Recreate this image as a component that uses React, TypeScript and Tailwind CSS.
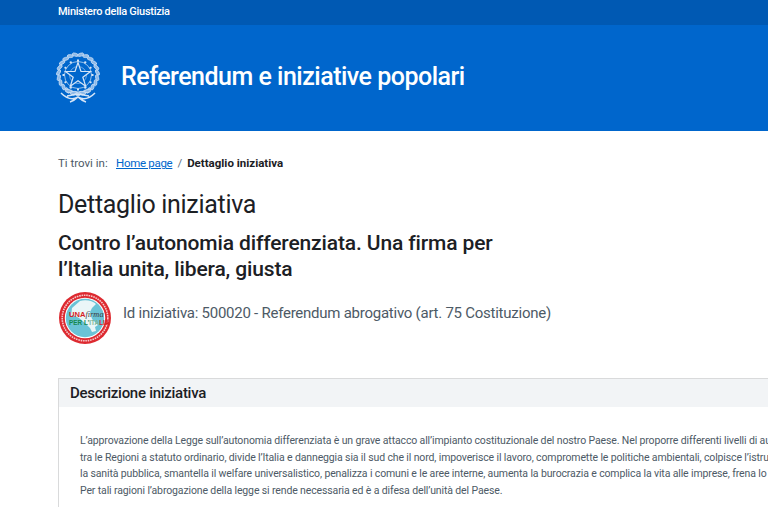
const F = "font-['Roboto','Noto_Sans',sans-serif]";

function Emblem() {
  const leaves = Array.from({ length: 14 }, (_, i) => i);
  const teeth = Array.from({ length: 12 }, (_, i) => i);
  return (
    <svg width="46" height="52" viewBox="0 0 46 52" fill="none" stroke="#d5e5f7" strokeWidth="1">
      {leaves.map((i) => {
        const deg = -82 + i * 15.5;
        const a = (deg * Math.PI) / 180;
        const r = 19.5;
        const lx = 23 - r * Math.cos(a);
        const rx = 23 + r * Math.cos(a);
        const y = 22 + r * Math.sin(a);
        return (
          <g key={i} fill="#8db9e8" strokeWidth="0.7">
            <ellipse cx={lx} cy={y} rx="3.1" ry="1.5" transform={`rotate(${90 - deg + 25} ${lx} ${y})`} />
            <ellipse cx={rx} cy={y} rx="3.1" ry="1.5" transform={`rotate(${90 + deg - 25} ${rx} ${y})`} />
          </g>
        );
      })}
      {teeth.map((i) => {
        const a = (i * 30 * Math.PI) / 180;
        return <line key={i} x1={23 + 13.5 * Math.sin(a)} y1={23 - 13.5 * Math.cos(a)} x2={23 + 15.5 * Math.sin(a)} y2={23 - 15.5 * Math.cos(a)} strokeWidth="2" />;
      })}
      <circle cx="23" cy="23" r="13.5" strokeWidth="0.7" />
      <circle cx="23" cy="23" r="8.5" strokeWidth="0.5" />
      <path d="M23 10.5 L26 19.5 L35.5 19.5 L27.8 25.2 L30.7 34.2 L23 28.7 L15.3 34.2 L18.2 25.2 L10.5 19.5 L20 19.5 Z" fill="#0066cc" strokeWidth="1.2" />
      <path d="M6 41 C12 47 18 48 23 45 C28 48 34 47 40 41 M12 44 L23 42 L34 44 M15 50 C18 49 21 47 23 45 C25 47 28 49 31 50" strokeWidth="1.5" />
    </svg>
  );
}

function Logo() {
  return (
    <svg width="52" height="52" viewBox="0 0 52 52">
      <circle cx="26" cy="26" r="26" fill="#dd2a30" />
      <circle cx="26" cy="26" r="22.8" fill="none" stroke="#f6c9cb" strokeWidth="1.6" strokeDasharray="1.6 0.8" />
      <circle cx="26" cy="26" r="20.2" fill="#fff" />
      <circle cx="26" cy="26" r="19.2" fill="#6ac3d6" />
      <path d="M21 9 C27 7 34 9 37 12 L33 16 L31 20 L33 27 L39 33 L36 35 L37 39 L33 40 L31 36 L26 31 L20 26 L14 23 L12 24 L13 16 Z" fill="#eaf6f8" />
      <text x="10" y="25" fontSize="7.6" fontWeight="900" fill="#d81f26" fontFamily="Liberation Sans">UNA<tspan fontSize="8.4" fontWeight="400" fontStyle="italic" fill="#3d3d3d" fontFamily="Liberation Serif">firma</tspan></text>
      <text x="10" y="33" fontSize="6.4" fontWeight="700" fill="#16894f" fontFamily="Liberation Sans">PER L'<tspan fill="#7fb89a">ITA</tspan><tspan fill="#d81f26">LIA</tspan></text>
    </svg>
  );
}

export default function App() {
  return (
    <div className={`${F} w-[768px] h-[507px] overflow-hidden bg-white text-[#1c2024]`}>
      <div className="h-[25px] bg-[#0059b3] pl-[58px] flex items-center">
        <span className="text-[11px] font-medium text-white tracking-[-0.27px]">Ministero della Giustizia</span>
      </div>
      <div className="h-[106px] bg-[#0066cc] pl-[55px] pt-[27px] flex items-start gap-[20px]">
        <Emblem />
        <h1 className="text-[25px] leading-[52px] font-medium text-white -mt-[1px] tracking-[-0.5px]">Referendum e iniziative popolari</h1>
      </div>
      <div className="pl-[58px] pt-[25px] w-[1000px]">
        <div className="flex items-center h-[16px] text-[11.5px]">
          <span className="text-[#4d5a66] w-[58px]">Ti trovi in:</span>
          <a className="text-[#0066cc] underline tracking-[-0.3px]">Home page</a>
          <span className="mx-[5px] text-[#5c6f82]">/</span>
          <span className="font-bold">Dettaglio iniziativa</span>
        </div>
        <h2 className="mt-[17px] text-[25px] leading-[32px] tracking-[-0.3px]">Dettaglio iniziativa</h2>
        <h3 className="mt-[9px] text-[21px] leading-[26px] w-[460px] font-medium tracking-[-0.13px]">Contro l’autonomia differenziata. Una firma per<br />l’Italia unita, libera, giusta</h3>
        <div className="mt-[10px] flex items-center h-[52px] ml-px">
          <Logo />
          <span className="ml-[12px] text-[15px] text-[#4d5a66] -mt-[9px] tracking-[-0.25px]">Id iniziativa: 500020 - Referendum abrogativo (art. 75 Costituzione)</span>
        </div>
        <div className="mt-[34px] border border-[#d9dadb] h-[200px]">
          <div className="h-[28px] bg-[#f2f4f6] flex items-center px-[11px]">
            <span className="text-[15px] font-medium tracking-[-0.28px]">Descrizione iniziativa</span>
          </div>
          <div className="pl-[21px] pt-[26px] text-[10.5px] leading-[16.5px] tracking-[-0.13px] text-[#4d5a66] whitespace-nowrap">
            <p>L’approvazione della Legge sull’autonomia differenziata è un grave attacco all’impianto costituzionale del nostro Paese. Nel proporre differenti livelli di autonomia</p>
            <p>tra le Regioni a statuto ordinario, divide l’Italia e danneggia sia il sud che il nord, impoverisce il lavoro, compromette le politiche ambientali, colpisce l’istruzione,</p>
            <p>la sanità pubblica, smantella il welfare universalistico, penalizza i comuni e le aree interne, aumenta la burocrazia e complica la vita alle imprese, frena lo sviluppo.</p>
            <p>Per tali ragioni l’abrogazione della legge si rende necessaria ed è a difesa dell’unità del Paese.</p>
          </div>
        </div>
      </div>
    </div>
  );
}
